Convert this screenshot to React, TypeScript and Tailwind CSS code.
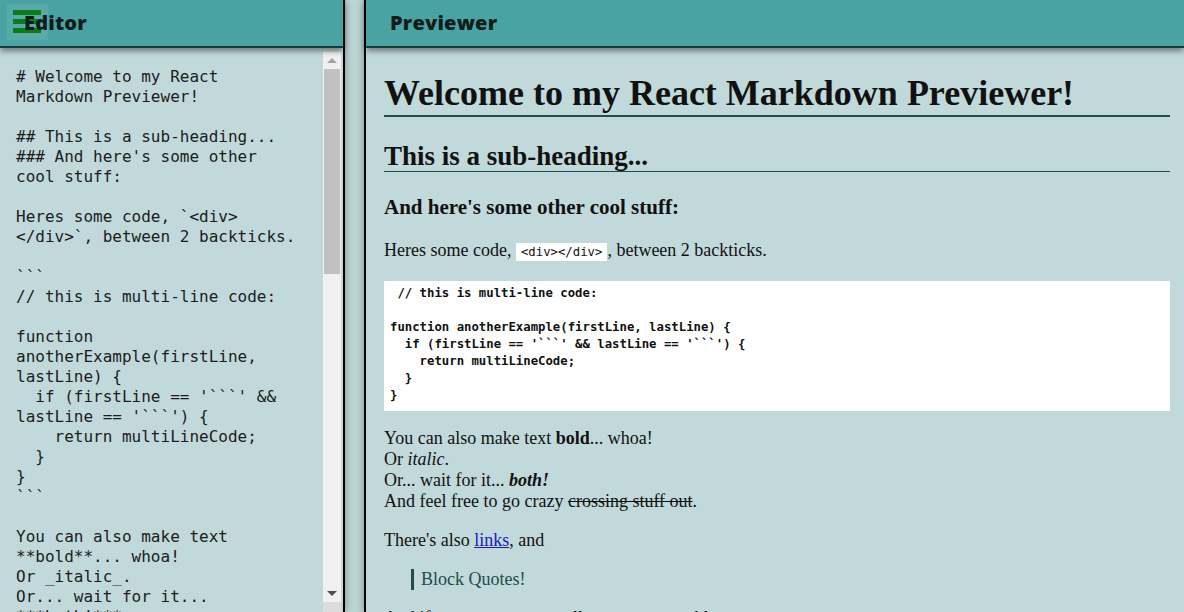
import React from "react";

const editorText = `# Welcome to my React
Markdown Previewer!

## This is a sub-heading...
### And here's some other
cool stuff:

Heres some code, \`<div>
</div>\`, between 2 backticks.

\`\`\`
// this is multi-line code:

function
anotherExample(firstLine,
lastLine) {
  if (firstLine == '\`\`\`' &&
lastLine == '\`\`\`') {
    return multiLineCode;
  }
}
\`\`\`

You can also make text
**bold**... whoa!
Or _italic_.
Or... wait for it...
***both!***
And feel free to go crazy
~~crossing stuff out~~.`;

const codeBlock = ` // this is multi-line code:

function anotherExample(firstLine, lastLine) {
  if (firstLine == '\`\`\`' && lastLine == '\`\`\`') {
    return multiLineCode;
  }
}`;

const PanelHeader = ({ title }: { title: string }) => (
  <div className="relative z-10 h-[48px] shrink-0 bg-[#4aa3a3] border-b-2 border-[#1d3a3a] shadow-[0_3px_6px_rgba(0,0,0,0.45)] flex items-center pl-[24px]">
    <span className="relative z-10 font-['Open_Sans',sans-serif] text-[20px] font-extrabold tracking-[0.2px] text-[#0e1c1c]">
      {title}
    </span>
  </div>
);

const Scrollbar = () => (
  <div className="w-[18px] shrink-0 mt-[4px] bg-[#f0f0f0] flex flex-col items-center">
    <div className="h-[17px] flex items-center justify-center">
      <div className="w-0 h-0 border-l-[5px] border-r-[5px] border-b-[5px] border-l-transparent border-r-transparent border-b-[#a3a3a3]" />
    </div>
    <div className="w-[16px] h-[205px] bg-[#c1c1c1]" />
    <div className="flex-1" />
    <div className="h-[17px] flex items-center justify-center">
      <div className="w-0 h-0 border-l-[5px] border-r-[5px] border-t-[5px] border-l-transparent border-r-transparent border-t-[#505050]" />
    </div>
    <div className="h-[10px] w-full bg-[#dcdcdc]" />
  </div>
);

const Editor = () => (
  <div className="relative w-[345px] shrink-0 flex flex-col border-r-2 border-black shadow-[0_0_8px_rgba(0,0,0,0.35)]">
    <div className="relative">
      {/* toggle icon sitting behind the title */}
      <div className="absolute z-[11] left-[7px] top-[4px] w-[41px] h-[36px] bg-[rgba(255,255,255,0.08)] flex flex-col pt-[6px] gap-[4px] pl-[6px]">
        <div className="w-[28px] h-[5px] bg-[#0c7d16]" />
        <div className="w-[25px] h-[5px] bg-[#0c7d16]" />
        <div className="w-[28px] h-[5px] bg-[#0c7d16]" />
      </div>
      <div className="absolute inset-0 z-[12] flex items-center pl-[24px] h-[46px] pointer-events-none">
        <span className="font-['Open_Sans',sans-serif] text-[20px] font-extrabold tracking-[0.2px] text-[#0e1c1c]">
          Editor
        </span>
      </div>
      <PanelHeader title="" />
    </div>
    <div className="flex flex-1 min-h-0 bg-[#c1d9da]">
      <div className="flex-1 overflow-hidden pl-4 pt-[19px] whitespace-pre font-['DejaVu_Sans_Mono',monospace] text-[16px] leading-[20px] text-[#1c1c1c]">
        {editorText}
      </div>
      <Scrollbar />
      <div className="w-[2px]" />
    </div>
  </div>
);

const Previewer = () => (
  <div className="flex-1 min-w-0 flex flex-col border-l-2 border-black shadow-[0_0_8px_rgba(0,0,0,0.35)]">
    <PanelHeader title="Previewer" />
    <div className="flex-1 min-h-0 overflow-hidden bg-[#c1d9da] pl-[18px] pr-[14px] pt-[27px] font-['Liberation_Serif',serif] text-[#111]">
      <h1 className="text-[36px] font-bold leading-[37px] pb-[3px] border-b-2 border-[#224b4b]">
        Welcome to my React Markdown Previewer!
      </h1>
      <h2 className="mt-[25px] text-[27px] font-bold leading-[28px] pb-[1px] border-b border-[#224b4b]">
        This is a sub-heading...
      </h2>
      <h3 className="mt-[24px] text-[21px] font-bold leading-[22px]">
        And here's some other cool stuff:
      </h3>
      <p className="mt-[22px] text-[18px] leading-[21px]">
        Heres some code,{" "}
        <code className="bg-white px-[5px] py-[2px] font-['DejaVu_Sans_Mono',monospace] text-[12.3px]">
          {"<div></div>"}
        </code>
        , between 2 backticks.
      </p>
      <pre className="mt-[18px] bg-white pl-[6px] pt-[4px] pb-[7px] font-['DejaVu_Sans_Mono',monospace] text-[12.3px] leading-[17px] font-bold text-[#111]">
        {codeBlock}
      </pre>
      <p className="mt-[17px] text-[18px] leading-[21px]">
        You can also make text <strong>bold</strong>... whoa!
        <br />
        Or <em>italic</em>.
        <br />
        Or... wait for it...{" "}
        <strong>
          <em>both!</em>
        </strong>
        <br />
        And feel free to go crazy <del>crossing stuff out</del>.
      </p>
      <p className="mt-[18px] text-[18px] leading-[21px]">
        There's also{" "}
        <a href="#" className="text-[#1a1ab8] underline">
          links
        </a>
        , and
      </p>
      <blockquote className="mt-[18px] ml-[27px] pl-[7px] border-l-[3px] border-[#224b4b] text-[18px] leading-[21px] text-[#224b4b]">
        Block Quotes!
      </blockquote>
      <p className="mt-[18px] text-[18px] leading-[21px]">
        And if you want to get really crazy, even tables:
      </p>
    </div>
  </div>
);

export default function App() {
  return (
    <div className="h-[612px] w-full overflow-hidden flex gap-[19px] bg-[#bcd5d5]">
      <Editor />
      <Previewer />
    </div>
  );
}
